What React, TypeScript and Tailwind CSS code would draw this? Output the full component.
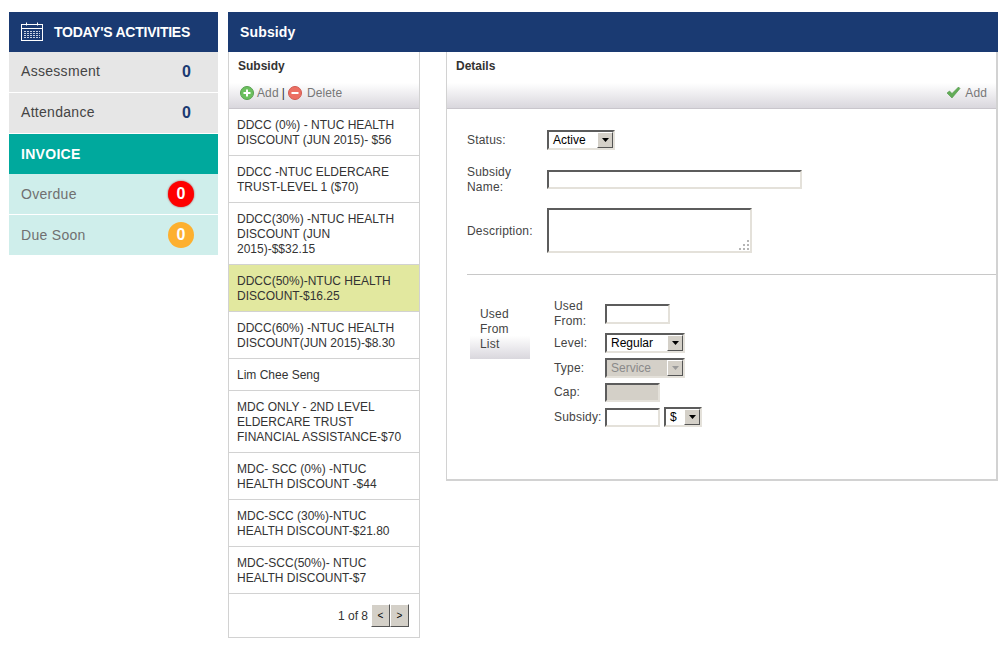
import React from 'react';

const subsidies = [
  { lines: ['DDCC (0%) - NTUC HEALTH', 'DISCOUNT (JUN 2015)- $56'] },
  { lines: ['DDCC -NTUC ELDERCARE', 'TRUST-LEVEL 1 ($70)'] },
  { lines: ['DDCC(30%) -NTUC HEALTH', 'DISCOUNT (JUN', '2015)-$$32.15'] },
  { lines: ['DDCC(50%)-NTUC HEALTH', 'DISCOUNT-$16.25'], active: true },
  { lines: ['DDCC(60%) -NTUC HEALTH', 'DISCOUNT(JUN 2015)-$8.30'] },
  { lines: ['Lim Chee Seng'] },
  { lines: ['MDC ONLY - 2ND LEVEL', 'ELDERCARE TRUST', 'FINANCIAL ASSISTANCE-$70'] },
  { lines: ['MDC- SCC (0%) -NTUC', 'HEALTH DISCOUNT -$44'] },
  { lines: ['MDC-SCC (30%)-NTUC', 'HEALTH DISCOUNT-$21.80'] },
  { lines: ['MDC-SCC(50%)- NTUC', 'HEALTH DISCOUNT-$7'] },
];

const inset = 'border-2 border-t-[#5c5c5c] border-l-[#5c5c5c] border-r-[#e4e1da] border-b-[#e4e1da]';

const CalendarIcon = () => (
  <svg width="24" height="20" viewBox="0 0 24 20" fill="none" stroke="white" strokeWidth="1">
    <rect x="1.5" y="2.500" width="21" height="16" />
    <path d="M1.5 6.500h21" />
    <path d="M6.500 0.500v3M17.500 0.500v3" />
    <path d="M4 9.500h16M4 11.500h16M4 13.500h16M4 15.500h16" strokeDasharray="2 1" stroke="#c8d0e0" />
  </svg>
);

const RoundIcon = ({ kind }: { kind: 'plus' | 'minus' }) => (
  <span
    className={`flex h-[14px] w-[14px] items-center justify-center rounded-full border ${
      kind === 'plus' ? 'border-[#58a04f] bg-[#6cc05f]' : 'border-[#d05a50] bg-[#ec6f63]'
    }`}
  >
    <svg width="8" height="8" viewBox="0 0 8 8" fill="white">
      <rect x="0.5" y="3" width="7" height="2" />
      {kind === 'plus' && <rect x="3" y="0.5" width="2" height="7" />}
    </svg>
  </span>
);

const FakeSelect = ({
  value,
  width,
  disabled,
}: {
  value: string;
  width: string;
  disabled?: boolean;
}) => (
  <div
    className={`flex h-5 items-center justify-between ${inset} ${width} ${
      disabled ? 'bg-[#d4d0c8] text-[#8a8a8a]' : 'bg-white text-black'
    }`}
  >
    <span className="pl-1 text-xs leading-none">{value}</span>
    <span className="flex h-4 w-4 items-center justify-center border border-t-white border-l-white border-r-[#555] border-b-[#555] bg-[#d4d0c8]">
      <svg width="7" height="4" viewBox="0 0 7 4" fill={disabled ? '#9a9a9a' : 'black'}>
        <path d="M0 0h7L3.500 4z" />
      </svg>
    </span>
  </div>
);

const Field = ({ label, children, className }: { label: React.ReactNode; children: React.ReactNode; className?: string }) => (
  <div className={`flex items-center ${className ?? ''}`}>
    <div className="w-[51px] text-xs leading-[15px] tracking-[0.2px] text-[#444]">{label}</div>
    {children}
  </div>
);

export default function App() {
  return (
    <div className="flex h-[645px] w-[1002px] gap-[10px] overflow-hidden bg-white pl-[9px] pt-3 font-['Liberation_Sans',Arial,sans-serif] text-[#333]">
      {/* sidebar */}
      <aside className="w-[209px] shrink-0">
        <div className="flex h-10 items-center bg-[#1a3a72] pl-[11px] text-white">
          <CalendarIcon />
          <span className="ml-[10px] text-sm font-bold tracking-[-0.25px]">TODAY'S ACTIVITIES</span>
        </div>
        <div className="flex h-[41px] items-center justify-between border-b border-white bg-[#e6e6e6] pl-3 pr-[27px]">
          <span className="pb-[2px] text-sm tracking-[0.3px] text-[#444]">Assessment</span>
          <span className="text-base font-bold text-[#1a3a72]">0</span>
        </div>
        <div className="flex h-[41px] items-center justify-between border-b border-white bg-[#e6e6e6] pl-3 pr-[27px]">
          <span className="pb-[2px] text-sm tracking-[0.3px] text-[#444]">Attendance</span>
          <span className="text-base font-bold text-[#1a3a72]">0</span>
        </div>
        <div className="flex h-10 items-center bg-[#00a99d] pl-3 text-sm font-bold tracking-[0.3px] text-white">INVOICE</div>
        <div className="flex h-[41px] items-center justify-between border-b border-white bg-[#cfeeeb] pl-3 pr-6">
          <span className="text-sm tracking-[0.3px] text-[#707070]">Overdue</span>
          <span className="flex h-[26px] w-[26px] items-center justify-center rounded-full bg-[#fe0000] text-base font-bold text-white shadow-[0_0_2px_#a33]">0</span>
        </div>
        <div className="flex h-10 items-center justify-between bg-[#cfeeeb] pl-3 pr-6">
          <span className="text-sm tracking-[0.3px] text-[#707070]">Due Soon</span>
          <span className="flex h-[26px] w-[26px] items-center justify-center rounded-full bg-[#fdb02f] text-base font-bold text-white">0</span>
        </div>
      </aside>

      {/* main */}
      <main className="w-[770px] shrink-0">
        <div className="flex h-10 items-center bg-[#1a3a72] pl-3 text-sm font-bold tracking-[0.15px] text-white">Subsidy</div>
        <div className="flex items-start gap-[26px]">
          {/* list */}
          <section className="w-[192px] shrink-0 border-x border-b border-[#d2d2d2]">
            <div className="h-[57px] border-b border-[#c9c6cc]">
              <div className="h-[31px] pl-[9px] pt-[6px] text-xs font-bold text-[#333]">Subsidy</div>
              <div className="flex h-[25px] items-start gap-[3px] bg-gradient-to-b from-white to-[#d9d7dd] pl-[11px] pt-[3px] text-xs leading-[15px] tracking-[0.1px] text-[#777]">
                <RoundIcon kind="plus" />
                <span>Add</span>
                <span className="text-[#333]">|</span>
                <RoundIcon kind="minus" />
                <span className="ml-[2px]">Delete</span>
              </div>
            </div>
            {subsidies.map((row) => (
              <div
                key={row.lines[0]}
                className={`border-b border-[#d2d2d2] px-2 pb-[7px] pt-[9px] text-xs leading-[15px] ${row.active ? 'bg-[#e2e89f]' : 'bg-white'}`}
              >
                {row.lines.map((line) => (
                  <div key={line} className="whitespace-nowrap">{line}</div>
                ))}
              </div>
            ))}
            <div className="flex h-[43px] items-center justify-end gap-[3px] pr-[10px] text-xs">
              <span>1 of 8</span>
              <div className="flex">
                <span className="flex h-[23px] w-[19px] items-center justify-center border border-t-white border-l-white border-r-[#555] border-b-[#555] bg-[#d4d0c8] text-[10px] text-black">&lt;</span>
                <span className="flex h-[23px] w-[19px] items-center justify-center border border-t-white border-l-white border-r-[#555] border-b-[#555] bg-[#d4d0c8] text-[10px] text-black">&gt;</span>
              </div>
            </div>
          </section>

          {/* details */}
          <section className="h-[429px] w-[552px] shrink-0 border-x border-b-2 border-[#d2d2d2] border-r-2">
            <div className="h-[57px] border-b border-[#c9c6cc]">
              <div className="h-[31px] pl-[9px] pt-[6px] text-xs font-bold text-[#333]">Details</div>
              <div className="flex h-[25px] items-start justify-end gap-1 bg-gradient-to-b from-white to-[#d9d7dd] pr-[9px] pt-[3px] text-xs leading-[15px] tracking-[0.1px] text-[#777]">
                <svg width="15" height="13" viewBox="0 0 15 13">
                  <path d="M1 7l2.500-2 2.500 2.500L12.500 1 14 2.500 6 12z" fill="#62ad57" stroke="#4f9446" strokeWidth="0.6" />
                </svg>
                <span>Add</span>
              </div>
            </div>

            <div className="pl-5 pt-[21px]">
              <div className="flex items-center">
                <div className="w-20 text-xs tracking-[0.2px] text-[#444]">Status:</div>
                <FakeSelect value="Active" width="w-[68px]" />
              </div>
              <div className="mt-[15px] flex items-center">
                <div className="w-20 text-xs leading-[15px] tracking-[0.2px] text-[#444]">
                  Subsidy
                  <br />
                  Name:
                </div>
                <input className={`mb-[2px] h-[19px] w-[255px] bg-white ${inset}`} />
              </div>
              <div className="mt-[13px] flex items-center">
                <div className="w-20 text-xs tracking-[0.2px] text-[#444]">Description:</div>
                <div className={`relative h-[45px] w-[205px] bg-white ${inset}`}>
                  <svg className="absolute bottom-0 right-0" width="12" height="12" viewBox="0 0 12 12" fill="#b5b5b5">
                    <rect x="9" y="1" width="2" height="2" />
                    <rect x="5" y="5" width="2" height="2" />
                    <rect x="9" y="5" width="2" height="2" />
                    <rect x="1" y="9" width="2" height="2" />
                    <rect x="5" y="9" width="2" height="2" />
                    <rect x="9" y="9" width="2" height="2" />
                  </svg>
                </div>
              </div>

              <div className="mt-[21px] h-px bg-[#c8c8c8]" />

              <div className="flex pl-[3px] pt-6">
                <div className="mt-2 h-[52px] w-[60px] bg-gradient-to-b from-white from-55% to-[#d9d7dd] pl-[10px] text-xs leading-[15px] tracking-[0.2px] text-[#444]">
                  Used
                  <br />
                  From
                  <br />
                  List
                </div>
                <div className="ml-6">
                  <Field label={<>Used<br />From:</>}>
                    <input className={`h-5 w-[65px] bg-white ${inset}`} />
                  </Field>
                  <Field label="Level:" className="mt-1">
                    <FakeSelect value="Regular" width="w-20" />
                  </Field>
                  <Field label="Type:" className="mt-[5px]">
                    <FakeSelect value="Service" width="w-20" disabled />
                  </Field>
                  <Field label="Cap:" className="mt-[5px]">
                    <div className={`h-[19px] w-[55px] bg-[#d4d0c8] ${inset} border-r-[#d4d0c8] border-b-[#d4d0c8]`} />
                  </Field>
                  <Field label="Subsidy:" className="mt-[5px]">
                    <input className={`h-[19px] w-[55px] bg-white ${inset}`} />
                    <div className="ml-1">
                      <FakeSelect value="$" width="w-[38px]" />
                    </div>
                  </Field>
                </div>
              </div>
            </div>
          </section>
        </div>
      </main>
    </div>
  );
}
